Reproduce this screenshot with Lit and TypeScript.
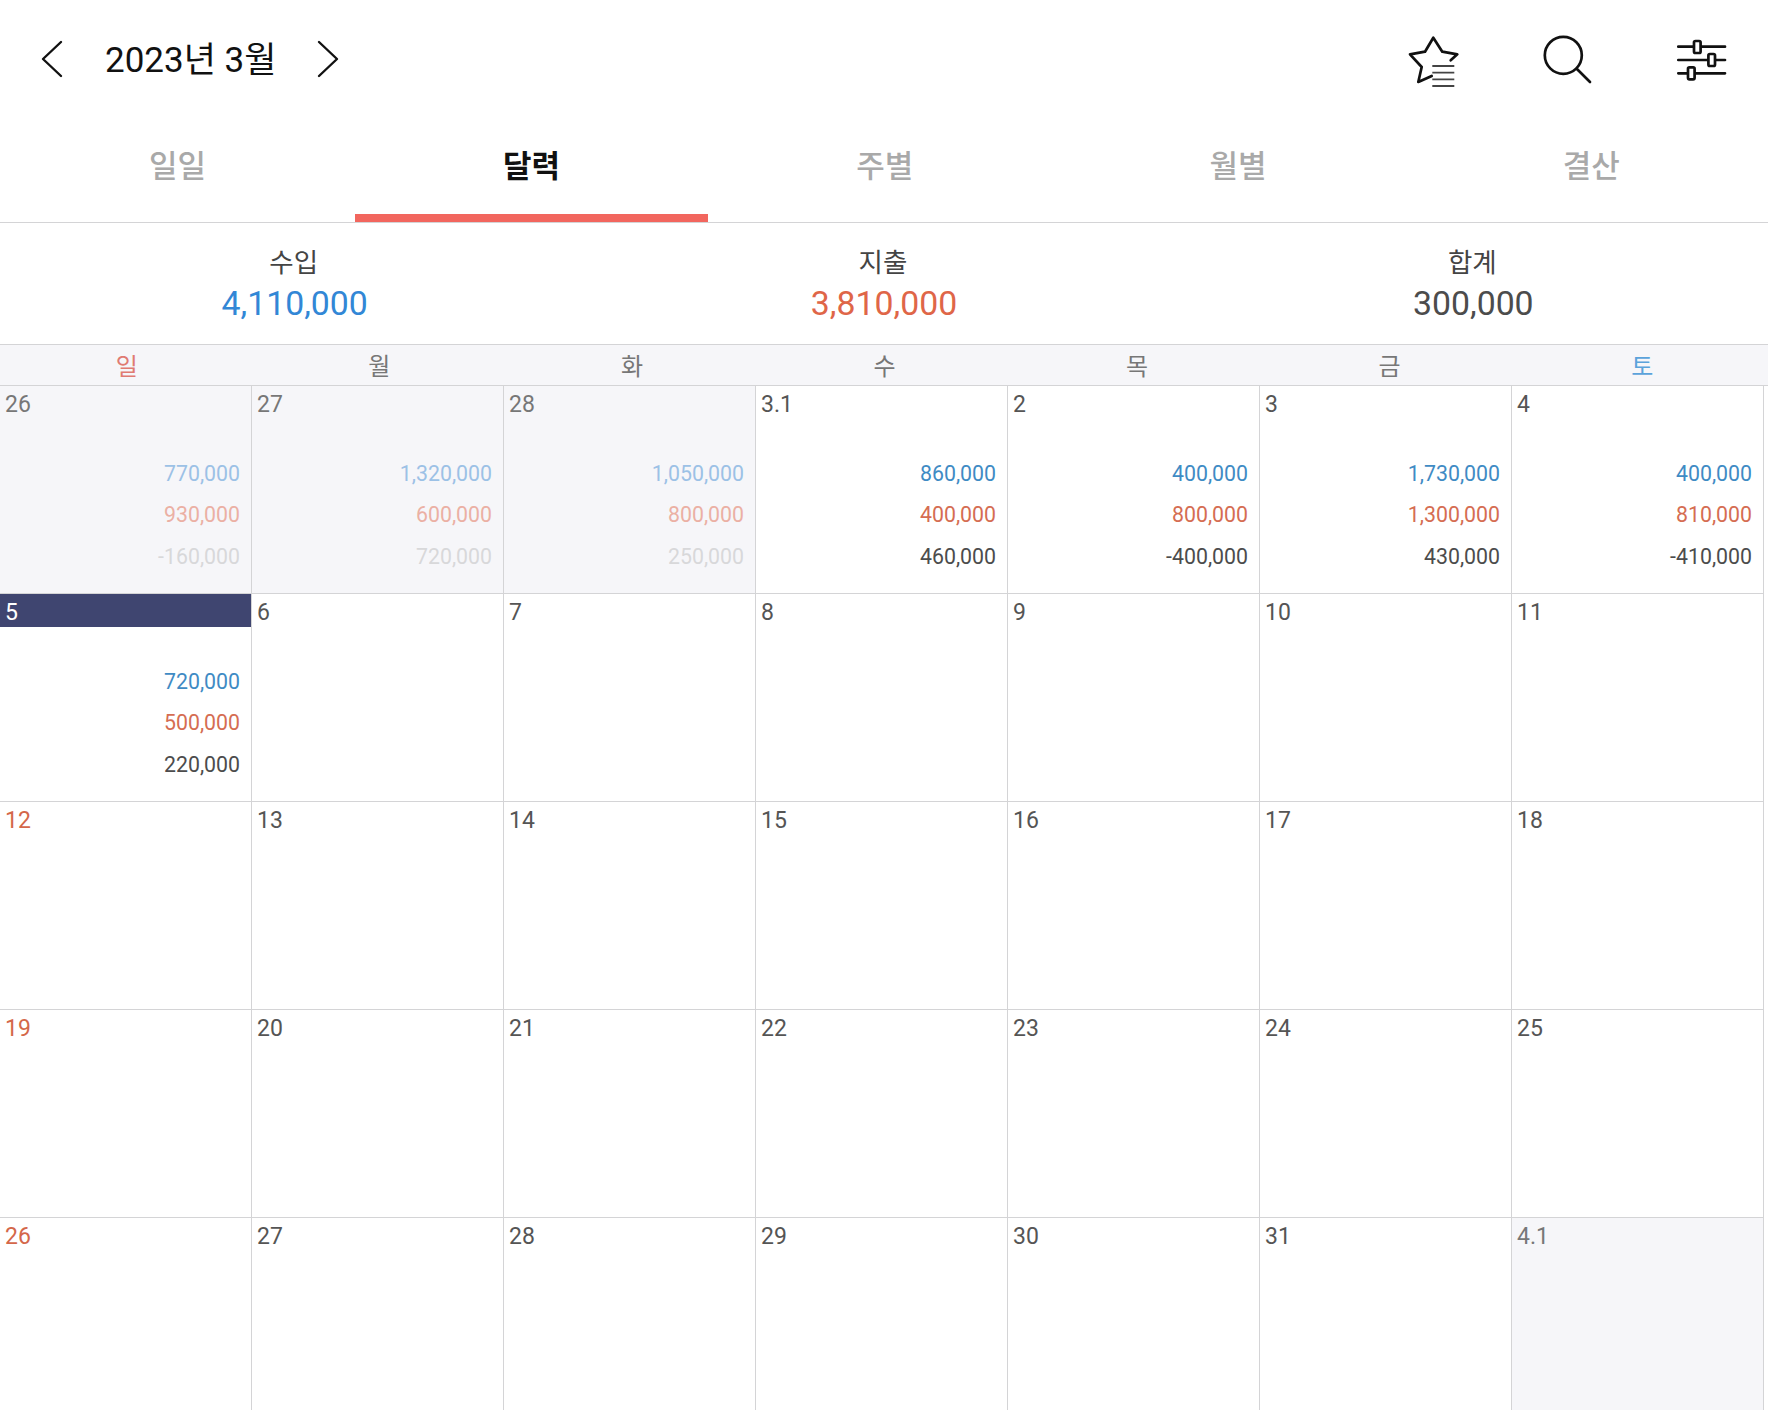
import { LitElement, html, css } from 'lit';
import { customElement } from 'lit/decorators.js';

type Day = { label: string; muted?: boolean; today?: boolean; sunday?: boolean; amounts?: [string, string, string] };

const WEEKDAYS = ['일', '월', '화', '수', '목', '금', '토'];
const TABS = ['일일', '달력', '주별', '월별', '결산'];

const DAYS: Day[] = [
  { label: '26', muted: true, amounts: ['770,000', '930,000', '-160,000'] },
  { label: '27', muted: true, amounts: ['1,320,000', '600,000', '720,000'] },
  { label: '28', muted: true, amounts: ['1,050,000', '800,000', '250,000'] },
  { label: '3.1', amounts: ['860,000', '400,000', '460,000'] },
  { label: '2', amounts: ['400,000', '800,000', '-400,000'] },
  { label: '3', amounts: ['1,730,000', '1,300,000', '430,000'] },
  { label: '4', amounts: ['400,000', '810,000', '-410,000'] },
  { label: '5', today: true, amounts: ['720,000', '500,000', '220,000'] },
  ...['6', '7', '8', '9', '10', '11'].map((label) => ({ label })),
  { label: '12', sunday: true },
  ...['13', '14', '15', '16', '17', '18'].map((label) => ({ label })),
  { label: '19', sunday: true },
  ...['20', '21', '22', '23', '24', '25'].map((label) => ({ label })),
  { label: '26', sunday: true },
  ...['27', '28', '29', '30', '31'].map((label) => ({ label })),
  { label: '4.1', muted: true },
];

@customElement('app-root')
export class AppRoot extends LitElement {
  static styles = css`
    :host {
      display: block;
      width: 1768px;
      height: 1410px;
      overflow: hidden;
      background: #fff;
      font-family: Roboto, 'Noto Sans CJK KR', sans-serif;
      color: #444;
    }

    .header {
      height: 118px;
      display: flex;
      align-items: center;
      padding: 0 37px 0 40px;
    }

    .chevron {
      width: 24px;
      height: 40px;
      fill: none;
      stroke: #111;
      stroke-width: 2.4;
      stroke-linecap: round;
      stroke-linejoin: round;
    }

    .title {
      margin: 0 40px 6px 41px;
      font-size: 35px;
      color: #111;
      white-space: nowrap;
    }

    .actions {
      margin-left: auto;
      padding-top: 3px;
      display: flex;
      gap: 74px;
    }

    .icon {
      width: 60px;
      height: 60px;
      fill: none;
      stroke: #111;
      stroke-width: 2.7;
      stroke-linecap: round;
      stroke-linejoin: round;
    }

    .icon .rule {
      stroke: #444;
      stroke-width: 1.8;
      stroke-linecap: butt;
    }

    .tabs {
      display: grid;
      grid-template-columns: 355px 353px 1fr 1fr 1fr;
      height: 104px;
      border-bottom: 1px solid #d4d4d6;
    }

    .tab {
      display: flex;
      align-items: center;
      justify-content: center;
      box-sizing: border-box;
      padding-bottom: 5px;
      border-bottom: 8px solid transparent;
      font-size: 31px;
      font-weight: 500;
      color: #a9a9a9;
    }

    .tab.active {
      color: #111;
      font-weight: 700;
      border-bottom-color: #f2665e;
    }

    .summary {
      display: grid;
      grid-template-columns: repeat(3, 1fr);
      height: 122px;
      box-sizing: border-box;
      padding-top: 22px;
      border-bottom: 1px solid #d4d4d6;
      text-align: center;
    }

    .summary .label {
      padding-right: 2px;
      font-size: 26.5px;
      line-height: 36px;
      color: #444;
    }

    .summary .value {
      font-size: 33.8px;
      line-height: 46px;
    }

    .income { color: #3287d6; }
    .expense { color: #df6648; }
    .total { color: #4c4c4c; }

    .weekdays {
      display: grid;
      grid-template-columns: repeat(7, 1fr);
      height: 40px;
      background: #f6f6f9;
      border-bottom: 1px solid #d4d4d6;
    }

    .weekday {
      display: flex;
      align-items: center;
      justify-content: center;
      padding: 0 0 1px 1px;
      font-size: 24px;
      color: #777;
    }

    .weekday.sun { color: #e07b72; }
    .weekday.sat { color: #5ba3db; }

    .grid {
      display: grid;
      grid-template-columns: repeat(7, 252px);
      grid-auto-rows: 208px;
    }

    .cell {
      box-sizing: border-box;
      border-right: 1px solid #d4d4d6;
      border-bottom: 1px solid #d4d4d6;
    }

    .cell.muted { background: #f6f6f9; }

    .date {
      height: 33px;
      box-sizing: border-box;
      padding: 3px 0 0 5px;
      font-size: 23px;
      line-height: 32px;
      color: #555;
    }

    .cell.muted .date { color: #777; }
    .cell.sunday .date { color: #d4674a; }

    .cell.today .date {
      background: #3f4570;
      color: #fff;
    }

    .amounts {
      padding: 34px 11px 0 0;
      text-align: right;
      font-size: 21.3px;
      line-height: 41.3px;
    }

    .in { color: #3f8bc4; }
    .out { color: #d56d52; }
    .net { color: #4c4c4c; }
    .cell.muted .in { color: #9cc1e6; }
    .cell.muted .out { color: #ebb0a4; }
    .cell.muted .net { color: #d8d8da; }
  `;

  private renderDay(day: Day) {
    const cls = ['cell', day.muted ? 'muted' : '', day.today ? 'today' : '', day.sunday ? 'sunday' : ''].join(' ');
    return html`
      <div class="${cls}">
        <div class="date">${day.label}</div>
        ${day.amounts
          ? html`
              <div class="amounts">
                <div class="in">${day.amounts[0]}</div>
                <div class="out">${day.amounts[1]}</div>
                <div class="net">${day.amounts[2]}</div>
              </div>
            `
          : ''}
      </div>
    `;
  }

  render() {
    return html`
      <div class="header">
        <svg class="chevron" viewBox="0 0 24 40"><polyline points="21 3 3 20 21 37"></polyline></svg>
        <div class="title">2023년 3월</div>
        <svg class="chevron" viewBox="0 0 24 40"><polyline points="3 3 21 20 3 37"></polyline></svg>
        <div class="actions">
          <svg class="icon" viewBox="0 0 60 60">
            <path d="M47.7 29.3 54.3 23.3 39.3 20.7 30.3 6.7 22 20.7 7 23.3 18.7 36 15.3 51 28.7 45"></path>
            <path class="rule" d="M29.3 35H51.3M29.3 41.7H51.3M29.3 48.3H51.3M29.3 55H51.3"></path>
          </svg>
          <svg class="icon" viewBox="0 0 60 60">
            <circle cx="26.3" cy="24.3" r="18.5"></circle>
            <path d="M39.7 37.7 53 51"></path>
          </svg>
          <svg class="icon" viewBox="0 0 60 60">
            <path d="M7.3 15.7H54M7.3 29H54M7.3 42.3H54"></path>
            <rect x="23" y="10" width="6.6" height="12" rx="1.5" fill="#fff"></rect>
            <rect x="37.4" y="23" width="6.6" height="12" rx="1.5" fill="#fff"></rect>
            <rect x="17" y="36.3" width="6.6" height="12" rx="1.5" fill="#fff"></rect>
          </svg>
        </div>
      </div>

      <div class="tabs">
        ${TABS.map((t, i) => html`<div class="tab ${i === 1 ? 'active' : ''}">${t}</div>`)}
      </div>

      <div class="summary">
        <div><div class="label">수입</div><div class="value income">4,110,000</div></div>
        <div><div class="label">지출</div><div class="value expense">3,810,000</div></div>
        <div><div class="label">합계</div><div class="value total">300,000</div></div>
      </div>

      <div class="weekdays">
        ${WEEKDAYS.map((d, i) => html`<div class="weekday ${i === 0 ? 'sun' : i === 6 ? 'sat' : ''}">${d}</div>`)}
      </div>

      <div class="grid">${DAYS.map((d) => this.renderDay(d))}</div>
    `;
  }
}

declare global {
  interface HTMLElementTagNameMap {
    'app-root': AppRoot;
  }
}
